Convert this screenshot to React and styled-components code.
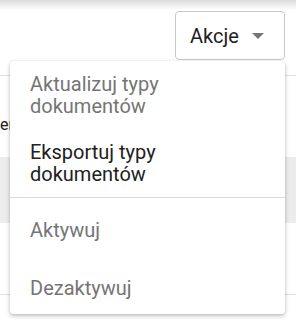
import styled, { createGlobalStyle } from 'styled-components';

const Global = createGlobalStyle`
  html, body {
    margin: 0;
    padding: 0;
    background: #fff;
    font-family: Roboto, "Liberation Sans", sans-serif;
  }
`;

const Page = styled.div`
  position: relative;
  width: 296px;
  height: 327px;
  overflow: hidden;
  background: #fff;
`;

const TopShadow = styled.div`
  height: 10px;
  background: linear-gradient(to bottom, #dcdcdc, #fff);
`;

const Toolbar = styled.div`
  display: flex;
  justify-content: flex-end;
  padding: 1px 11px 0 0;
`;

const ActionButton = styled.button`
  display: flex;
  align-items: center;
  gap: 13px;
  width: 110px;
  height: 49px;
  padding: 0 0 0 14px;
  border: 1px solid #c8c8c8;
  border-radius: 4px;
  background: #fff;
  color: #212121;
  font-family: inherit;
  font-size: 20px;
  cursor: pointer;
`;

const Caret = styled.span`
  width: 0;
  height: 0;
  border-left: 6px solid transparent;
  border-right: 6px solid transparent;
  border-top: 6px solid #757575;
`;

const Row = styled.div`
  display: flex;
  align-items: center;
  box-sizing: border-box;
  height: ${(p) => p.$h}px;
  padding-top: ${(p) => p.$offset || 0}px;
  background: ${(p) => (p.$shade ? '#ececec' : '#fff')};
  border-bottom: ${(p) => (p.$line ? '1px solid #e0e0e0' : 'none')};
  font-size: 16px;
  color: #212121;
`;

const Menu = styled.ul`
  position: absolute;
  top: 61px;
  left: 10px;
  width: 275px;
  margin: 0;
  padding: 0;
  list-style: none;
  background: #fff;
  border-radius: 4px;
  box-shadow: 0 2px 4px rgba(0, 0, 0, 0.25), 0 0 2px rgba(0, 0, 0, 0.08);
`;

const Item = styled.li`
  padding: ${(p) => (p.$single ? '21px 20px 15px' : '12px 20px')};
  font-size: 20px;
  line-height: 22px;
  color: ${(p) => (p.$muted ? '#757575' : '#212121')};
`;

const Divider = styled.li`
  height: 1px;
  background: #dcdcdc;
`;

export default function App() {
  return (
    <Page>
      <Global />
      <TopShadow />
      <Toolbar>
        <ActionButton>
          Akcje
          <Caret />
        </ActionButton>
      </Toolbar>
      <Row $h={16} $line />
      <Row $h={81} $offset={16}>er</Row>
      <Row $h={66} $shade />
      <Row $h={72} $line />
      <Menu>
        <Item $muted>Aktualizuj typy dokumentów</Item>
        <Item>Eksportuj typy dokumentów</Item>
        <Divider />
        <Item $single $muted>Aktywuj</Item>
        <Item $single $muted>Dezaktywuj</Item>
      </Menu>
    </Page>
  );
}
